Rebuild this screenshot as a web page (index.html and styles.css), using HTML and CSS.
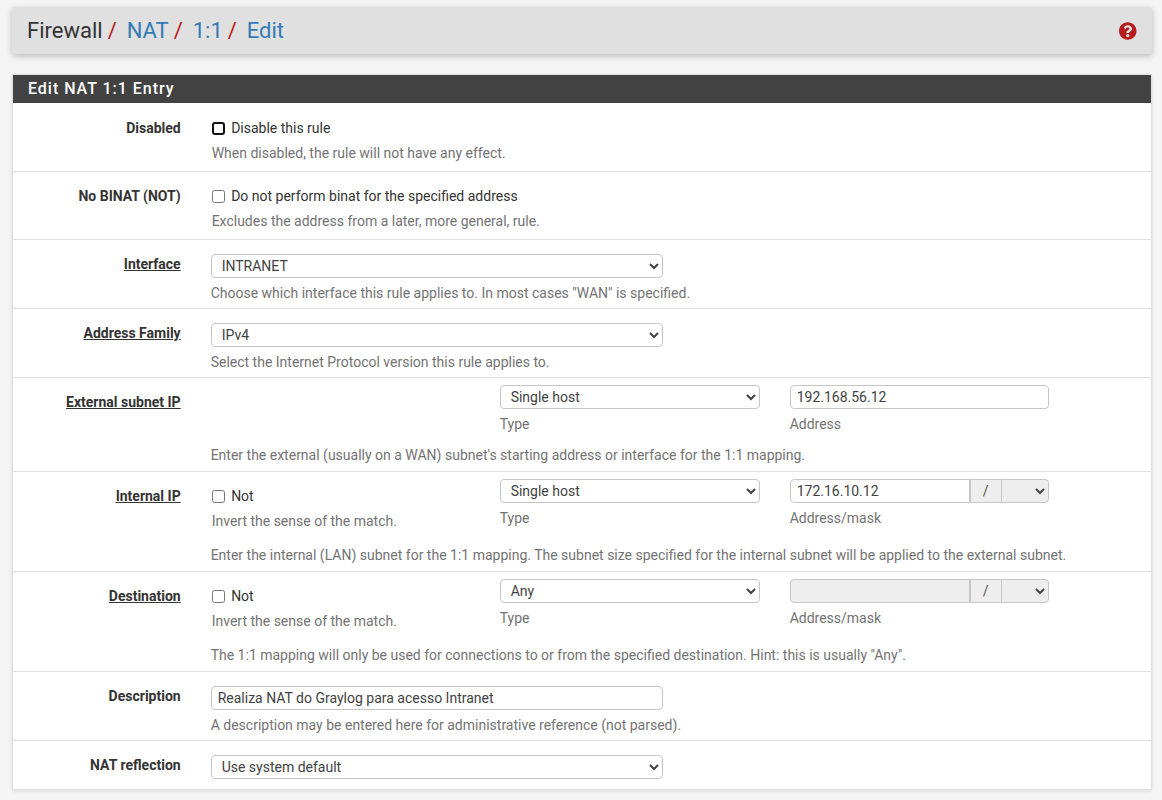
FILE: index.html
```html
<!DOCTYPE html>
<html lang="en">
<head>
  <meta charset="UTF-8" />
  <title>Firewall / NAT / 1:1 / Edit</title>
  <link rel="stylesheet" href="styles.css">
</head>
<body>
  <div class="breadcrumb-bar">
    <h1 class="crumbs">
      <span>Firewall</span><i class="sep">/</i>
      <a href="#">NAT</a><i class="sep">/</i>
      <a href="#">1:1</a><i class="sep">/</i>
      <a href="#">Edit</a>
    </h1>
    <a href="#" class="help-icon" aria-label="Help">
      <svg viewBox="8 8 496 496" width="17.5" height="18"><path fill="#b71c1c" d="M504 256c0 136.997-111.043 248-248 248S8 392.997 8 256C8 119.083 119.043 8 256 8s248 111.083 248 248zM262.655 90c-54.497 0-89.255 22.957-116.549 63.758-3.536 5.286-2.353 12.415 2.715 16.258l34.699 26.31c5.205 3.947 12.621 3.008 16.665-2.122 17.864-22.658 30.113-35.797 57.303-35.797 20.429 0 45.698 13.148 45.698 32.958 0 14.976-12.363 22.667-32.534 33.976C247.128 238.528 216 254.941 216 296v4c0 6.627 5.373 12 12 12h56c6.627 0 12-5.373 12-12v-1.333c0-28.462 83.186-29.647 83.186-106.667 0-58.002-60.165-102-116.531-102zM256 338c-25.365 0-46 20.635-46 46 0 25.364 20.635 46 46 46s46-20.636 46-46c0-25.365-20.635-46-46-46z"/></svg>
    </a>
  </div>

  <form class="panel">
    <div class="panel-heading">Edit NAT 1:1 Entry</div>

    <div class="row row-check row-first">
      <div class="row-label">Disabled</div>
      <div class="row-body">
        <label class="check"><input type="checkbox" class="focused"> Disable this rule</label>
        <p class="help">When disabled, the rule will not have any effect.</p>
      </div>
    </div>

    <div class="row row-check">
      <div class="row-label">No BINAT (NOT)</div>
      <div class="row-body">
        <label class="check"><input type="checkbox"> Do not perform binat for the specified address</label>
        <p class="help">Excludes the address from a later, more general, rule.</p>
      </div>
    </div>

    <div class="row row-select">
      <div class="row-label"><u>Interface</u></div>
      <div class="row-body">
        <select class="field wide"><option>INTRANET</option></select>
        <p class="help">Choose which interface this rule applies to. In most cases "WAN" is specified.</p>
      </div>
    </div>

    <div class="row row-select">
      <div class="row-label"><u>Address Family</u></div>
      <div class="row-body">
        <select class="field wide"><option>IPv4</option></select>
        <p class="help">Select the Internet Protocol version this rule applies to.</p>
      </div>
    </div>

    <div class="row row-triple row-external">
      <div class="row-label"><u>External subnet IP</u></div>
      <div class="row-body">
        <div class="triple">
          <div></div>
          <div>
            <select class="field"><option>Single host</option></select>
            <p class="sub">Type</p>
          </div>
          <div>
            <input class="field text" type="text" value="192.168.56.12">
            <p class="sub">Address</p>
          </div>
        </div>
        <p class="help">Enter the external (usually on a WAN) subnet's starting address or interface for the 1:1 mapping.</p>
      </div>
    </div>

    <div class="row row-triple">
      <div class="row-label"><u>Internal IP</u></div>
      <div class="row-body">
        <div class="triple">
          <div class="not-col">
            <label class="check"><input type="checkbox"> Not</label>
            <p class="sub invert">Invert the sense of the match.</p>
          </div>
          <div>
            <select class="field"><option>Single host</option></select>
            <p class="sub">Type</p>
          </div>
          <div>
            <div class="input-group">
              <input class="field text" type="text" value="172.16.10.12">
              <span class="addon">/</span>
              <select class="field mask"><option></option></select>
            </div>
            <p class="sub">Address/mask</p>
          </div>
        </div>
        <p class="help">Enter the internal (LAN) subnet for the 1:1 mapping. The subnet size specified for the internal subnet will be applied to the external subnet.</p>
      </div>
    </div>

    <div class="row row-triple">
      <div class="row-label"><u>Destination</u></div>
      <div class="row-body">
        <div class="triple">
          <div class="not-col">
            <label class="check"><input type="checkbox"> Not</label>
            <p class="sub invert">Invert the sense of the match.</p>
          </div>
          <div>
            <select class="field"><option>Any</option></select>
            <p class="sub">Type</p>
          </div>
          <div>
            <div class="input-group">
              <input class="field text" type="text" disabled>
              <span class="addon">/</span>
              <select class="field mask"><option></option></select>
            </div>
            <p class="sub">Address/mask</p>
          </div>
        </div>
        <p class="help">The 1:1 mapping will only be used for connections to or from the specified destination. Hint: this is usually "Any".</p>
      </div>
    </div>

    <div class="row row-select">
      <div class="row-label">Description</div>
      <div class="row-body">
        <input class="field text wide" type="text" value="Realiza NAT do Graylog para acesso Intranet">
        <p class="help">A description may be entered here for administrative reference (not parsed).</p>
      </div>
    </div>

    <div class="row row-last">
      <div class="row-label">NAT reflection</div>
      <div class="row-body">
        <select class="field wide"><option>Use system default</option></select>
      </div>
    </div>
  </form>
</body>
</html>
```

FILE: styles.css
```css
* {
  box-sizing: border-box;
}

html, body {
  height: 800px;
  overflow: hidden;
}

body {
  margin: 0;
  padding: 7px 10px 0 12px;
  background: #f5f5f5;
  color: #333;
  font-family: Roboto, sans-serif;
  font-size: 14px;
  line-height: 20px;
}

.breadcrumb-bar {
  display: flex;
  align-items: center;
  justify-content: space-between;
  height: 47px;
  padding: 0 15px;
  background: #e0e0e0;
  border-radius: 3px;
  box-shadow: 0 2px 6px rgba(0, 0, 0, 0.25);
}

.crumbs {
  margin: 0;
  color: #333;
  font-size: 22px;
  font-weight: 400;
  line-height: 24px;
}

.crumbs a {
  color: #337ab7;
  text-decoration: none;
}

.sep {
  margin: 0 4.5px 0 5px;
  color: #b71c1c;
  font-style: normal;
}

.help-icon {
  display: flex;
  margin-right: 0.5px;
}

.panel {
  margin: 21px 1px 0;
  background: #fff;
  box-shadow: 0 0 0 1px #e0e0e0, 0 1px 4px rgba(0, 0, 0, 0.2);
}

.panel-heading {
  height: 28px;
  padding: 0 15px;
  background: #424242;
  color: #fff;
  font-size: 16px;
  font-weight: 500;
  letter-spacing: 0.97px;
  line-height: 27px;
}

.row {
  display: grid;
  grid-template-columns: 167.67px 1fr;
  column-gap: 30px;
  border-bottom: 1px solid #e0e0e0;
}

.row-label {
  font-weight: 700;
  text-align: right;
}

.row-check {
  height: 68px;
  padding-top: 14px;
}

.row-first {
  height: 69px;
  padding-top: 15px;
}

.row-select {
  height: 69px;
  padding-top: 14px;
}

.row-triple {
  height: 100px;
  padding-top: 7px;
}

.row-external {
  height: 94px;
}

.row-triple .row-label {
  padding-top: 7px;
}

.row-last {
  height: 48px;
  padding-top: 14px;
  border-bottom: 0;
}

.row-body {
  min-width: 0;
}

.check {
  display: block;
  padding-left: 1px;
}

.check input {
  width: 13px;
  height: 13px;
  margin: 0 3px 0 0;
  vertical-align: -2px;
}

.check .focused {
  appearance: none;
  border: 2px solid #111;
  border-radius: 3px;
  background: #fff;
}

.help, .sub {
  margin: 0;
  color: #737373;
}

.row-check .help {
  margin-top: 5px;
  padding-left: 1px;
}

.row-select .help {
  margin-top: 5px;
}

.row-triple .help {
  margin-top: 14px;
}

.row-external .help {
  margin-top: 11px;
}

.sub {
  margin-top: 5px;
}

.invert {
  padding-left: 1px;
}

.not-col {
  padding-top: 7px;
}

.triple {
  display: grid;
  grid-template-columns: 259px 260px 259px;
  column-gap: 30px;
}

.field {
  display: block;
  width: 100%;
  height: 24px;
  padding: 0 6px;
  border: 1px solid #c6c6c6;
  border-radius: 4px;
  background: #fff;
  color: #424242;
  font-family: inherit;
  font-size: 14px;
}

.wide {
  width: 452px;
}

.input-group {
  display: flex;
}

.input-group .text {
  flex: 1;
  min-width: 0;
  border-radius: 4px 0 0 4px;
}

.input-group .text:disabled {
  background: #eee;
}

.addon {
  width: 31px;
  height: 24px;
  border: 1px solid #c6c6c6;
  border-width: 1px 0 1px 1px;
  background: #eee;
  color: #555;
  text-align: center;
  line-height: 22px;
}

.mask {
  width: 48px;
  border-radius: 0 4px 4px 0;
  background: #eee;
}
```
